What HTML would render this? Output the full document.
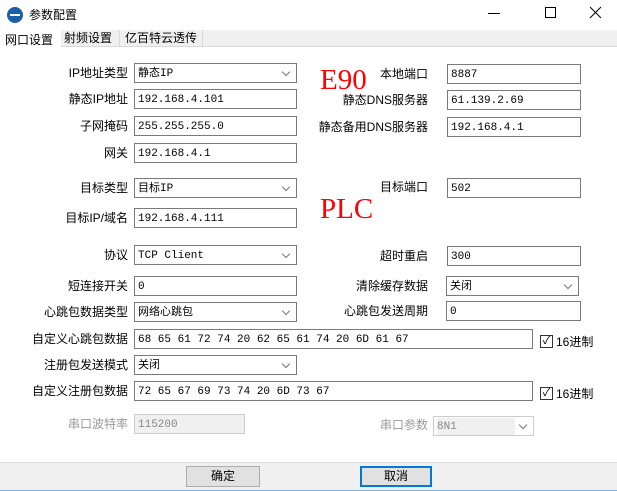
<!DOCTYPE html><html><head><meta charset="utf-8"><style>
*{box-sizing:border-box;margin:0;padding:0}
body{width:617px;height:491px;background:#fff;font-family:"Liberation Sans","Noto Sans CJK SC",sans-serif;font-size:12px;color:#000;position:relative;overflow:hidden}
.a{position:absolute;white-space:nowrap}
.l{position:absolute;text-align:right;white-space:nowrap;line-height:20px}
.f{position:absolute;height:20px;border:1px solid #7a7a7a;background:#fff;line-height:19px;padding-top:1px;padding-left:3px;font-family:"Liberation Mono","Noto Sans CJK SC",monospace;font-size:11px;white-space:nowrap;overflow:hidden}
.s::after{content:"";position:absolute;right:7px;top:5px;width:5px;height:5px;border-right:1px solid #777;border-bottom:1px solid #777;transform:rotate(45deg)}
.d{background:#f0f0f0;border-color:#ccc;color:#888}
.cb{position:absolute;width:13px;height:13px;border:1px solid #333;background:#fff;font-size:11px;line-height:11px;text-align:center}
.red{position:absolute;color:#f00;font-family:"Liberation Serif",serif;font-size:29px;line-height:30px}
.btn{position:absolute;height:21px;border:1px solid #adadad;background:#e1e1e1;text-align:center;line-height:19px}
</style></head><body>
<div class="a" style="left:7px;top:7px;width:16px;height:16px;border-radius:50%;background:#1b5fa8"><div style="position:absolute;left:3px;top:7px;width:10px;height:2px;background:#fff"></div></div>
<div class="a" style="left:29px;top:6px">参数配置</div>
<div class="a" style="left:488px;top:13px;width:12px;height:1px;background:#000"></div>
<div class="a" style="left:545px;top:7px;width:11px;height:11px;border:1px solid #000"></div>
<svg class="a" style="left:589px;top:6px" width="13" height="13"><path d="M1 1L12 12M12 1L1 12" stroke="#000" stroke-width="1"/></svg>
<div class="a" style="left:0;top:30px;width:617px;height:17px;background:#f0f0f0;border-bottom:1px solid #d9d9d9"></div>
<div class="a" style="left:0;top:29px;width:61px;height:19px;background:#fff"></div>
<div class="a" style="left:5px;top:31px">网口设置</div>
<div class="a" style="left:61px;top:30px;width:59px;height:17px;border-right:1px solid #d9d9d9;padding-left:3px;line-height:17px">射频设置</div>
<div class="a" style="left:120px;top:30px;width:83px;height:17px;border-right:1px solid #d9d9d9;padding-left:5px;line-height:17px">亿百特云透传</div>

<div class="l" style="right:489px;top:63px">IP地址类型</div><div class="f s" style="left:134px;top:63px;width:163px">静态IP</div>
<div class="l" style="right:489px;top:89px">静态IP地址</div><div class="f" style="left:134px;top:89px;width:163px">192.168.4.101</div>
<div class="l" style="right:489px;top:116px">子网掩码</div><div class="f" style="left:134px;top:116px;width:163px">255.255.255.0</div>
<div class="l" style="right:489px;top:143px">网关</div><div class="f" style="left:134px;top:143px;width:163px">192.168.4.1</div>
<div class="l" style="right:489px;top:178px">目标类型</div><div class="f s" style="left:134px;top:178px;width:163px">目标IP</div>
<div class="l" style="right:489px;top:208px">目标IP/域名</div><div class="f" style="left:134px;top:208px;width:163px">192.168.4.111</div>
<div class="l" style="right:489px;top:245px">协议</div><div class="f s" style="left:134px;top:245px;width:163px">TCP Client</div>
<div class="l" style="right:489px;top:276px">短连接开关</div><div class="f" style="left:134px;top:276px;width:163px">0</div>
<div class="l" style="right:489px;top:302px">心跳包数据类型</div><div class="f s" style="left:134px;top:302px;width:163px">网络心跳包</div>
<div class="l" style="right:489px;top:329px">自定义心跳包数据</div><div class="f" style="left:134px;top:329px;width:399px">68 65 61 72 74 20 62 65 61 74 20 6D 61 67</div>
<div class="l" style="right:489px;top:355px">注册包发送模式</div><div class="f s" style="left:134px;top:355px;width:163px">关闭</div>
<div class="l" style="right:489px;top:381px">自定义注册包数据</div><div class="f" style="left:134px;top:381px;width:399px">72 65 67 69 73 74 20 6D 73 67</div>
<div class="l" style="right:489px;top:414px;color:#999">串口波特率</div><div class="f d" style="left:134px;top:414px;width:111px">115200</div>

<div class="l" style="right:189px;top:64px">本地端口</div><div class="f" style="left:447px;top:64px;width:134px">8887</div>
<div class="l" style="right:189px;top:90px">静态DNS服务器</div><div class="f" style="left:447px;top:90px;width:134px">61.139.2.69</div>
<div class="l" style="right:189px;top:117px">静态备用DNS服务器</div><div class="f" style="left:447px;top:117px;width:134px">192.168.4.1</div>
<div class="l" style="right:189px;top:177px">目标端口</div><div class="f" style="left:447px;top:178px;width:134px">502</div>
<div class="l" style="right:189px;top:246px">超时重启</div><div class="f" style="left:447px;top:246px;width:134px">300</div>
<div class="l" style="right:189px;top:276px">清除缓存数据</div><div class="f s" style="left:446px;top:276px;width:133px">关闭</div>
<div class="l" style="right:189px;top:301px">心跳包发送周期</div><div class="f" style="left:446px;top:301px;width:135px">0</div>
<div class="l" style="right:189px;top:415px;color:#999">串口参数</div><div class="f d s" style="left:433px;top:416px;width:101px;background:#fff"><span style="background:#f0f0f0;display:inline-block;width:78px">8N1</span></div>

<div class="cb" style="left:540px;top:335px">✓</div><div class="a" style="left:556px;top:333px">16进制</div>
<div class="cb" style="left:540px;top:387px">✓</div><div class="a" style="left:556px;top:385px">16进制</div>

<div class="red" style="left:320px;top:65px">E90</div>
<div class="red" style="left:320px;top:194px">PLC</div>

<div class="a" style="left:0;top:462px;width:617px;height:29px;background:#f0f0f0;border-top:1px solid #dcdcdc"></div>
<div class="btn" style="left:186px;top:466px;width:74px">确定</div>
<div class="btn" style="left:360px;top:466px;width:72px;border:2px solid #0078d7;line-height:17px">取消</div>
<div class="a" style="left:0;top:490px;width:617px;height:1px;background:#7fb3e0"></div>
</body></html>
